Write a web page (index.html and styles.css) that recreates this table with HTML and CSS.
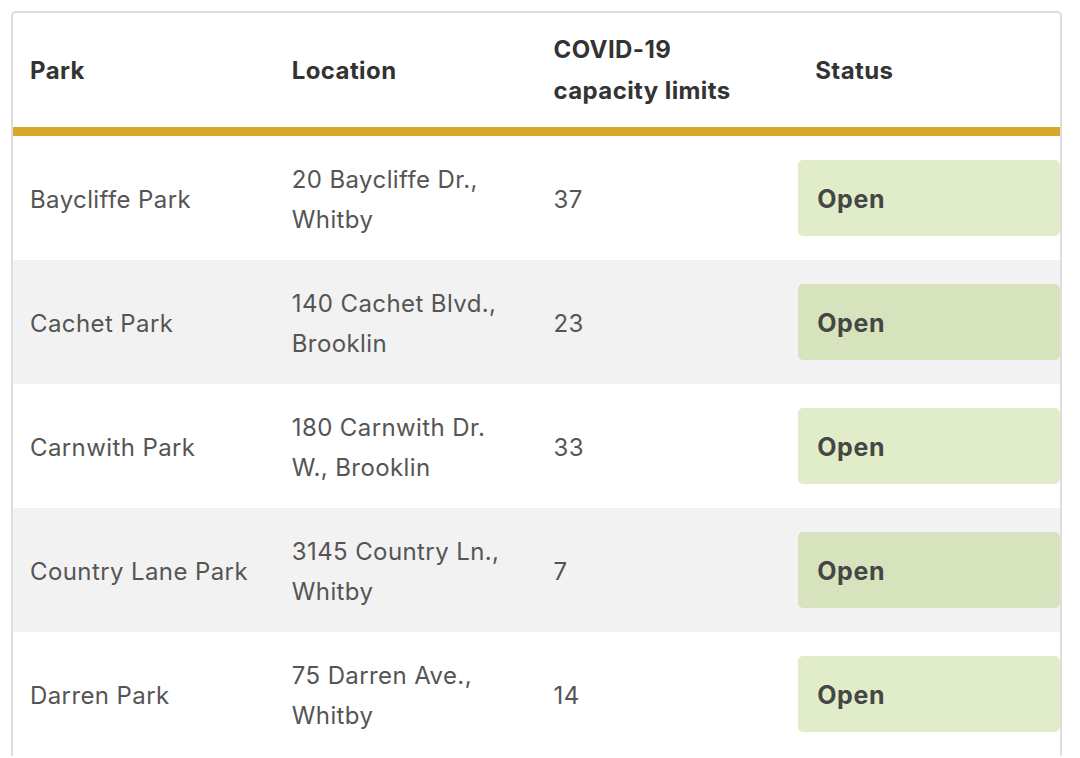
FILE: index.html
```html
<!DOCTYPE html>
<html lang="en">
<head>
<meta charset="utf-8">
<title>Parks</title>
<link rel="stylesheet" href="styles.css">
</head>
<body>
<div class="wrap">
  <table class="parks">
    <thead>
      <tr>
        <th>Park</th>
        <th>Location</th>
        <th>COVID-19 capacity limits</th>
        <th>Status</th>
      </tr>
    </thead>
    <tbody>
      <tr>
        <td>Baycliffe Park</td>
        <td>20 Baycliffe Dr., Whitby</td>
        <td>37</td>
        <td class="status"><span class="badge">Open</span></td>
      </tr>
      <tr>
        <td>Cachet Park</td>
        <td>140 Cachet Blvd., Brooklin</td>
        <td>23</td>
        <td class="status"><span class="badge">Open</span></td>
      </tr>
      <tr>
        <td>Carnwith Park</td>
        <td>180 Carnwith Dr. W., Brooklin</td>
        <td>33</td>
        <td class="status"><span class="badge">Open</span></td>
      </tr>
      <tr>
        <td>Country Lane Park</td>
        <td>3145 Country Ln., Whitby</td>
        <td>7</td>
        <td class="status"><span class="badge">Open</span></td>
      </tr>
      <tr>
        <td>Darren Park</td>
        <td>75 Darren Ave., Whitby</td>
        <td>14</td>
        <td class="status"><span class="badge">Open</span></td>
      </tr>
    </tbody>
  </table>
</div>
</body>
</html>
```
FILE: styles.css
```css
html, body {
  margin: 0;
  padding: 0;
  background: #ffffff;
}
body {
  font-family: Inter, "Noto Sans", "Liberation Sans", sans-serif;
}
.wrap {
  margin: 11px 0 0 11px;
  width: 1047px;
  border: 2px solid #dedede;
  border-bottom: none;
  border-radius: 5px 5px 0 0;
  overflow: hidden;
}
.parks {
  width: 100%;
  border-collapse: collapse;
  table-layout: fixed;
}
.parks th {
  text-align: left;
  font-weight: 700;
  font-size: 24px;
  letter-spacing: 0.4px;
  line-height: 41px;
  color: #333333;
  padding: 16px 17px;
  height: 82px;
  border-bottom: 9px solid #d9a82b;
  vertical-align: middle;
}
.parks td {
  font-size: 24px;
  letter-spacing: 0.4px;
  line-height: 40px;
  color: #555555;
  padding: 24px 17px 20px 17px;
  height: 80px;
  vertical-align: middle;
}
.parks tbody tr:nth-child(even) td {
  background: #f2f2f2;
}
.parks td.status {
  padding: 24px 0;
  height: 76px;
}
.badge {
  display: block;
  height: 73px;
  padding-top: 3px;
  line-height: 73px;
  padding-left: 19px;
  font-size: 25px;
  font-weight: 700;
  letter-spacing: 0.6px;
  color: #464646;
  background: #e1edc8;
  border-radius: 5px;
}
.parks tbody tr:nth-child(even) .badge {
  background: #d6e3bc;
}
```
